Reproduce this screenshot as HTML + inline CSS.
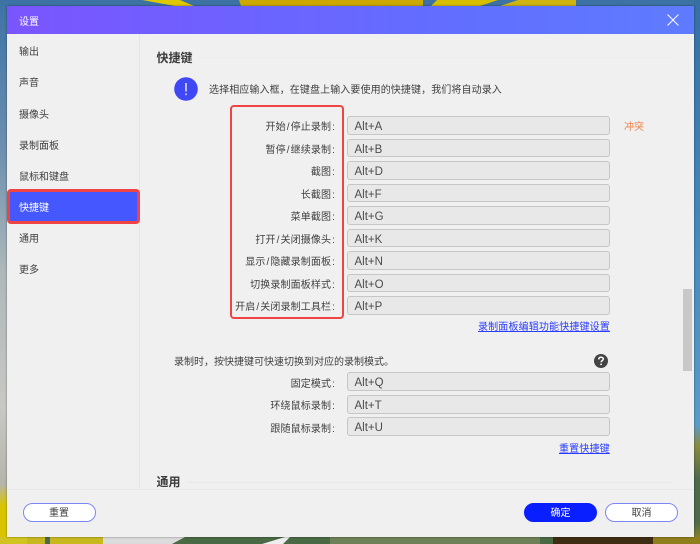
<!DOCTYPE html>
<html lang="zh">
<head>
<meta charset="utf-8">
<title>设置</title>
<style>
html,body{margin:0;padding:0;width:700px;height:544px;overflow:hidden}
body{position:relative;background:#3d72a5;font-family:"Liberation Sans","Noto Sans CJK SC",sans-serif;font-size:10px;color:#404040}
.a{position:absolute;white-space:nowrap}
.bg{position:absolute;left:0;top:0}
#dlg{position:absolute;left:7px;top:6px;width:687px;height:531px;background:#f0f0f0;overflow:hidden;box-shadow:0 0 2px rgba(0,0,0,.45);filter:blur(.25px)}
#hdr{position:absolute;left:0;top:0;width:687px;height:28px;background:linear-gradient(90deg,#7a55ff,#6070ff 70%,#5f7bff)}
.nav{position:absolute;left:12px;line-height:14px;color:#404040}
.lab{position:absolute;right:359px;line-height:14px;color:#404040;white-space:nowrap;letter-spacing:.12px}
.lab b{font-weight:normal;margin:0 1px}
.lab u{text-decoration:none;margin-left:1px}
.inp{position:absolute;left:339.5px;width:261.5px;height:16.8px;background:#e8e8e8;border:1px solid #c6c6c6;border-radius:3px;font-size:11.5px;line-height:21px;color:#4c4c4c;text-indent:7px}
.btn{position:absolute;top:497px;width:71px;height:17px;border:1.5px solid #7c86f6;border-radius:10px;background:#fff;text-align:center;line-height:19px;color:#404040}
.link{position:absolute;color:#2a3cff;text-decoration:underline;line-height:14px;white-space:nowrap;letter-spacing:.15px}
</style>
</head>
<body>
<svg class="bg" width="700" height="544" viewBox="0 0 700 544">
<defs>
<linearGradient id="l" x1="0" y1="0" x2="0" y2="1">
<stop offset="0" stop-color="#3d72a5"/><stop offset=".27" stop-color="#6c8fae"/><stop offset=".5" stop-color="#aeb8ba"/><stop offset=".75" stop-color="#c8c8c4"/><stop offset=".89" stop-color="#b5b5ac"/><stop offset=".93" stop-color="#d8c400"/><stop offset="1" stop-color="#d8c400"/>
</linearGradient>
<linearGradient id="r" x1="0" y1="0" x2="0" y2="1">
<stop offset="0" stop-color="#3570a5"/><stop offset=".5" stop-color="#4a8dbe"/><stop offset=".78" stop-color="#5a9cc8"/><stop offset=".82" stop-color="#8a8a40"/><stop offset=".88" stop-color="#4e6a4a"/><stop offset=".96" stop-color="#4e6a4a"/><stop offset="1" stop-color="#9a8a20"/>
</linearGradient>
</defs>
<rect x="0" y="0" width="7" height="544" fill="url(#l)"/>
<rect x="694" y="0" width="6" height="544" fill="url(#r)"/>
<polygon points="142,0 180,0 194,6 175,6" fill="#e0c800"/>
<polygon points="239,0 423,0 423,6 241,6" fill="#cda800"/>
<polygon points="437,0 498,0 480,6 431,6" fill="#d8be00"/>
<polygon points="518,0 576,0 576,6 500,6" fill="#cfb410"/>
<rect x="0" y="537" width="700" height="7" fill="#4a6a45"/>
<rect x="0" y="537" width="30" height="7" fill="#d2c420"/>
<rect x="27" y="537" width="76" height="7" fill="#c8b820"/>
<rect x="45" y="537" width="5" height="7" fill="#4a6a50"/>
<polygon points="103,537 185,537 172,544 103,544" fill="#dcdcdc"/>
<polygon points="262,544 285,537 290,537 283,544" fill="#eeeeee"/>
<rect x="330" y="537" width="210" height="7" fill="#6e8058"/>
<rect x="553" y="537" width="100" height="7" fill="#3f2c12"/>
<rect x="653" y="537" width="47" height="7" fill="#8f7e1c"/>
</svg>

<div id="dlg">
  <div id="hdr"></div>
  <div class="a" style="left:12px;top:10px;color:#fff;line-height:14px">设置</div>
  <svg class="a" style="left:660px;top:8px" width="12" height="12" viewBox="0 0 12 12"><path d="M.5.5l11 11M11.5.5l-11 11" stroke="#fff" stroke-width="1" fill="none"/></svg>

  <div class="a" style="left:132px;top:28px;width:1px;height:455px;background:#e6e6e6"></div>
  <div class="nav" style="top:40px">输出</div>
  <div class="nav" style="top:71px">声音</div>
  <div class="nav" style="top:102.5px">摄像头</div>
  <div class="nav" style="top:133.5px">录制面板</div>
  <div class="nav" style="top:164.5px">鼠标和键盘</div>
  <div class="a" style="left:0;top:183px;width:127px;height:28.5px;background:#4558ff;border:3px solid #f04444;border-radius:4px"></div>
  <div class="nav" style="top:195.5px;color:#fff">快捷键</div>
  <div class="nav" style="top:226.5px">通用</div>
  <div class="nav" style="top:257.5px">更多</div>

  <div class="a" style="left:149.5px;top:44px;font-size:12px;line-height:17px;font-weight:bold;color:#3c3c3c">快捷键</div>
  <div class="a" style="left:191px;top:51px;width:475px;height:1px;background:#ebebeb"></div>

  <svg class="a" style="left:167px;top:70.5px" width="24" height="24" viewBox="0 0 24 24"><circle cx="12" cy="12" r="11.8" fill="#4048f5"/><path d="M12 6v8.5M12 16.5v1.6" stroke="#fff" stroke-width="1.3" fill="none"/></svg>
  <div class="a" style="left:202px;top:78px;line-height:14px;letter-spacing:.1px">选择相应输入框，在键盘上输入要使用的快捷键，我们将自动录入</div>

  <div class="a" style="left:223px;top:98.5px;width:110px;height:210px;border:2.5px solid #f04444;border-radius:4px"></div>

  <div class="lab" style="top:115px">开始<b>/</b>停止录制<u>:</u></div>
  <div class="lab" style="top:137.5px">暂停<b>/</b>继续录制<u>:</u></div>
  <div class="lab" style="top:160px">截图<u>:</u></div>
  <div class="lab" style="top:182.5px">长截图<u>:</u></div>
  <div class="lab" style="top:205px">菜单截图<u>:</u></div>
  <div class="lab" style="top:227.5px">打开<b>/</b>关闭摄像头<u>:</u></div>
  <div class="lab" style="top:250px">显示<b>/</b>隐藏录制面板<u>:</u></div>
  <div class="lab" style="top:272.5px">切换录制面板样式<u>:</u></div>
  <div class="lab" style="top:295px">开启<b>/</b>关闭录制工具栏<u>:</u></div>

  <div class="inp" style="top:110px">Alt+A</div>
  <div class="inp" style="top:132.5px">Alt+B</div>
  <div class="inp" style="top:155px">Alt+D</div>
  <div class="inp" style="top:177.5px">Alt+F</div>
  <div class="inp" style="top:200px">Alt+G</div>
  <div class="inp" style="top:222.5px">Alt+K</div>
  <div class="inp" style="top:245px">Alt+N</div>
  <div class="inp" style="top:267.5px">Alt+O</div>
  <div class="inp" style="top:290px">Alt+P</div>

  <div class="a" style="left:617px;top:115px;line-height:14px;color:#f08040">冲突</div>
  <div class="link" style="left:471px;top:315px">录制面板编辑功能快捷键设置</div>

  <div class="a" style="left:167px;top:350px;line-height:14px">录制时，按快捷键可快速切换到对应的录制模式。</div>
  <svg class="a" style="left:586.5px;top:347.5px" width="14" height="14" viewBox="0 0 14 14"><circle cx="7" cy="7" r="7" fill="#444"/><path d="M4.7 5.4C4.8 3.9 5.8 3.2 7 3.2 8.3 3.2 9.3 4 9.3 5.1 9.3 6.6 7.1 6.7 7.1 8.3" stroke="#fff" stroke-width="1.5" fill="none"/><path d="M7.1 9.6v1.5" stroke="#fff" stroke-width="1.6" fill="none"/></svg>

  <div class="lab" style="top:371.5px">固定模式<u>:</u></div>
  <div class="lab" style="top:394px">环绕鼠标录制<u>:</u></div>
  <div class="lab" style="top:416.5px">跟随鼠标录制<u>:</u></div>
  <div class="inp" style="top:366px">Alt+Q</div>
  <div class="inp" style="top:389px">Alt+T</div>
  <div class="inp" style="top:411px">Alt+U</div>
  <div class="link" style="left:552px;top:437px">重置快捷键</div>

  <div class="a" style="left:149.5px;top:468px;font-size:12px;line-height:17px;font-weight:bold;color:#3c3c3c;height:15px;overflow:hidden">通用</div>
  <div class="a" style="left:181px;top:476px;width:485px;height:1px;background:#e8e8e8"></div>

  <div class="a" style="left:676px;top:283px;width:9px;height:82px;background:#c8c8c8"></div>

  <div class="a" style="left:0;top:483px;width:687px;height:48px;background:#f0f0f0;border-top:1px solid #e8e8e8"></div>
  <div class="btn" style="left:15.5px">重置</div>
  <div class="btn" style="left:517px;background:#0a1fff;border-color:#0a1fff;color:#fff">确定</div>
  <div class="btn" style="left:598px">取消</div>
</div>
</body>
</html>
